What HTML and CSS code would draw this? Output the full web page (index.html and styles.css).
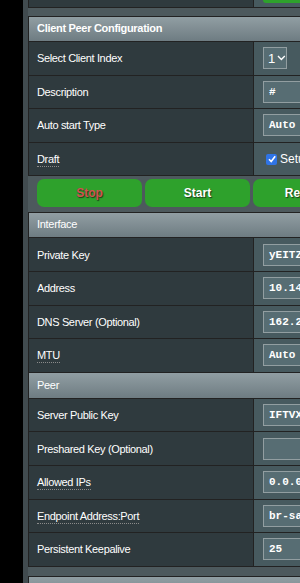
FILE: index.html
```html
<!DOCTYPE html>
<html lang="en">
<head>
    <meta charset="UTF-8">
    <meta name="viewport" content="width=device-width, initial-scale=1.0">
    <title>WireGuard Client</title>
    <link rel="stylesheet" href="styles.css">
</head>
<body>
<div class="page">

    <div class="prev-row">
        <div class="label-cell"></div>
        <div class="value-cell"><span class="prev-btn"></span></div>
    </div>

    <div class="form-table">
        <div class="table-head bold">Client Peer Configuration</div>
        <div class="row">
            <div class="label">Select Client Index</div>
            <div class="value">
                <span class="select">1<svg width="9" height="6" viewBox="0 0 9 6"><path d="M1 1 L4.5 4.5 L8 1" fill="none" stroke="#fff" stroke-width="1.4"/></svg></span>
            </div>
        </div>
        <div class="row">
            <div class="label">Description</div>
            <div class="value"><span class="input">#</span></div>
        </div>
        <div class="row">
            <div class="label">Auto start Type</div>
            <div class="value"><span class="input">Auto</span></div>
        </div>
        <div class="row">
            <div class="label"><span class="hint">Draft</span></div>
            <div class="value">
                <span class="check"><svg width="10" height="10" viewBox="0 0 10 10"><path d="M2 5.2 L4.2 7.5 L8.2 2.2" fill="none" stroke="#fff" stroke-width="1.6"/></svg></span>
                <span class="check-text">Setup</span>
            </div>
        </div>
    </div>

    <div class="btn-bar">
        <button class="btn stop">Stop</button>
        <button class="btn">Start</button>
        <button class="btn">Restart</button>
    </div>

    <div class="form-table">
        <div class="table-head">Interface</div>
        <div class="row">
            <div class="label">Private Key</div>
            <div class="value"><span class="input">yEITZqk2s</span></div>
        </div>
        <div class="row">
            <div class="label">Address</div>
            <div class="value"><span class="input">10.14.0.2</span></div>
        </div>
        <div class="row">
            <div class="label">DNS Server (Optional)</div>
            <div class="value"><span class="input">162.252.172.57</span></div>
        </div>
        <div class="row">
            <div class="label"><span class="hint">MTU</span></div>
            <div class="value"><span class="input">Auto</span></div>
        </div>

        <div class="table-head peer">Peer</div>
        <div class="row">
            <div class="label">Server Public Key</div>
            <div class="value"><span class="input">IFTVXzNs</span></div>
        </div>
        <div class="row">
            <div class="label">Preshared Key (Optional)</div>
            <div class="value"><span class="input"></span></div>
        </div>
        <div class="row">
            <div class="label"><span class="hint">Allowed IPs</span></div>
            <div class="value"><span class="input">0.0.0.0/0</span></div>
        </div>
        <div class="row">
            <div class="label"><span class="hint">Endpoint Address:Port</span></div>
            <div class="value"><span class="input">br-sao.prod</span></div>
        </div>
        <div class="row">
            <div class="label">Persistent Keepalive</div>
            <div class="value"><span class="input">25</span></div>
        </div>
    </div>

    <div class="form-table next">
        <div class="table-head"></div>
    </div>

</div>
</body>
</html>
```

FILE: styles.css
```css
body {
    margin: 0;
    background: #000;
    overflow: hidden;
    font-family: "Liberation Sans", Arial, sans-serif;
    color: #fff;
}

.page {
    margin-left: 23px;
    border-left: 5px solid #414b4f;
    width: 600px;
    background: #4d595d;
}

.prev-row {
    display: flex;
    height: 8px;
    box-sizing: border-box;
    border-left: 1px solid #222;
    border-bottom: 1px solid #222;
    margin-bottom: 8px;
}
.prev-row .label-cell {
    width: 224px;
    background: #2f3a3e;
    border-right: 1px solid #222;
}
.prev-row .value-cell {
    flex: 1;
    background: #475a5f;
    padding-left: 9px;
}
.prev-btn {
    display: block;
    width: 90px;
    height: 3px;
    background: #2ea12c;
    border-radius: 0 0 5px 5px;
}

.form-table {
    border: 1px solid #222;
    border-top: none;
}

.table-head {
    height: 25px;
    box-sizing: border-box;
    border-top: 1px solid #222;
    background: linear-gradient(#919ea3, #6e7c82);
    padding-left: 8px;
    font-size: 11px;
    letter-spacing: -0.3px;
    line-height: 23px;
}
.table-head.bold {
    font-weight: bold;
}
.table-head.peer {
    height: 26px;
    line-height: 24px;
}

.row {
    display: flex;
    height: 33.6px;
    box-sizing: border-box;
    border-top: 1px solid #222;
}

.label {
    width: 225px;
    box-sizing: border-box;
    background: #2f3a3e;
    border-right: 1px solid #222;
    padding-left: 8px;
    font-size: 11px;
    letter-spacing: -0.35px;
    display: flex;
    align-items: center;
}

.hint {
    border-bottom: 1px dotted #8a8a8a;
    padding-bottom: 1px;
    margin-top: 2px;
}

.value {
    flex: 1;
    background: #475a5f;
    padding-left: 9px;
    display: flex;
    align-items: center;
}

.input {
    display: block;
    width: 200px;
    height: 22px;
    box-sizing: border-box;
    background: #576d73;
    border: 1px solid #929ea1;
    padding-left: 5px;
    font-family: "Liberation Mono", "DejaVu Sans Mono", monospace;
    font-size: 11px;
    font-weight: bold;
    line-height: 20px;
    white-space: nowrap;
    overflow: hidden;
}

.select {
    display: flex;
    align-items: center;
    gap: 2px;
    width: 24px;
    height: 22px;
    box-sizing: border-box;
    background: #576d73;
    border: 1px solid #929ea1;
    padding-left: 4px;
    font-size: 13px;
}

.check {
    display: flex;
    align-items: center;
    justify-content: center;
    width: 11px;
    height: 11px;
    margin-left: 3px;
    background: #2f74e6;
    border-radius: 2px;
}
.check-text {
    margin-left: 3px;
    font-size: 12px;
}

.btn-bar {
    display: flex;
    gap: 3px;
    height: 36px;
    box-sizing: border-box;
    padding: 3px 0 0 9px;
}

.btn {
    width: 105px;
    height: 28px;
    border: none;
    border-radius: 7px;
    background: #2ea12c;
    font-family: "Liberation Sans", Arial, sans-serif;
    font-size: 12px;
    font-weight: bold;
    color: #fff;
    text-shadow: 1px 1px 1px #1a3a1a;
}
.btn.stop {
    color: #d0524f;
}

.next {
    margin-top: 9px;
    border-bottom: none;
}
```
